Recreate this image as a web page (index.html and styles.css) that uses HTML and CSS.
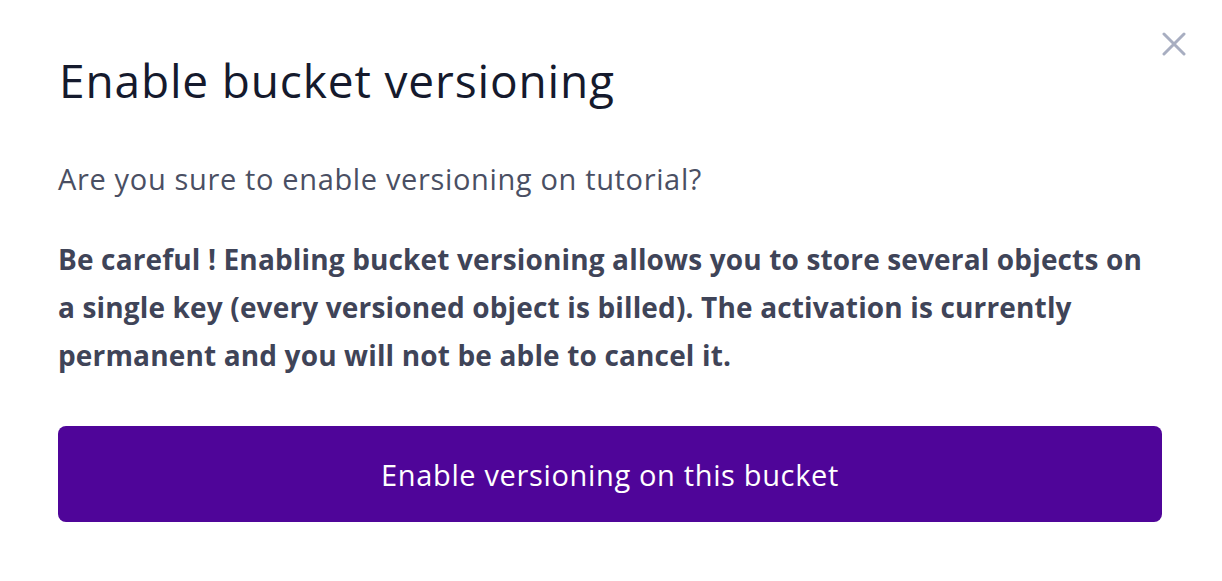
FILE: index.html
```html
<!DOCTYPE html>
<html lang="en">
<head>
<meta charset="utf-8">
<title>Enable bucket versioning</title>
<link rel="stylesheet" href="styles.css">
</head>
<body>
<div class="modal">
  <button class="close" aria-label="Close">
    <svg width="24" height="24" viewBox="0 0 24 24"><path d="M2 2 L22 22 M22 2 L2 22" stroke="#a8aec1" stroke-width="3" stroke-linecap="round" fill="none"/></svg>
  </button>
  <h1 class="title">Enable bucket versioning</h1>
  <p class="question">Are you sure to enable versioning on tutorial?</p>
  <p class="warning">Be careful ! Enabling bucket versioning allows you to store several objects on a single key (every versioned object is billed). The activation is currently permanent and you will not be able to cancel it.</p>
  <button class="primary">Enable versioning on this bucket</button>
</div>
</body>
</html>
```
FILE: styles.css
```css
html, body {
  margin: 0;
  padding: 0;
  background: #ffffff;
}
body {
  font-family: "Open Sans", "Noto Sans", sans-serif;
}
.modal {
  position: relative;
  width: 1222px;
  height: 581px;
  box-sizing: border-box;
  padding: 50px 60px 0 58px;
  display: flex;
  flex-direction: column;
}
.close {
  position: absolute;
  top: 32px;
  right: 36px;
  background: none;
  border: 0;
  padding: 0;
  width: 24px;
  height: 24px;
  cursor: pointer;
}
.close svg { display: block; }
.title {
  margin: 0 0 0 1px;
  font-size: 46px;
  line-height: 60px;
  letter-spacing: 0.85px;
  font-weight: 400;
  color: #151a2d;
}
.question {
  margin: 49px 0 0;
  font-size: 29px;
  line-height: 40px;
  letter-spacing: 0.65px;
  color: #4a4f63;
}
.warning {
  margin: 36px 0 0;
  max-width: 1100px;
  font-size: 28px;
  line-height: 48px;
  letter-spacing: 0.15px;
  font-weight: 700;
  color: #3f4458;
}
.primary {
  margin-top: 47px;
  height: 96px;
  width: 100%;
  border: 0;
  border-radius: 8px;
  background: #4f0599;
  color: #ffffff;
  font-family: inherit;
  font-size: 29px;
  letter-spacing: 0.65px;
  cursor: pointer;
}
```
